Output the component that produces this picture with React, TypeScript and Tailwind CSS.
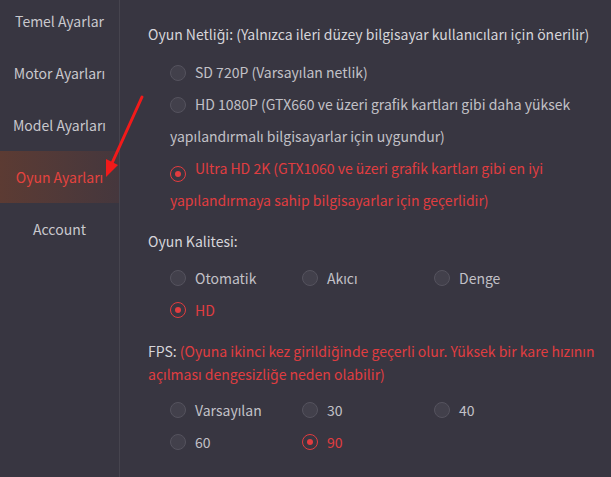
import React, { useState } from 'react';

const menu = ['Temel Ayarlar', 'Motor Ayarları', 'Model Ayarları', 'Oyun Ayarları', 'Account'];

const Radio: React.FC<{ on: boolean }> = ({ on }) => (
  <span
    className={`inline-flex h-4 w-4 shrink-0 items-center justify-center rounded-full border align-[-3px] ${
      on ? 'border-[#e23c3f] bg-transparent' : 'border-[#55535e] bg-[#42404b]'
    }`}
  >
    {on && <span className="h-[6px] w-[6px] rounded-full bg-[#e23c3f]" />}
  </span>
);

const App: React.FC = () => {
  const [active, setActive] = useState(3);
  const [netlik, setNetlik] = useState(2);
  const [kalite, setKalite] = useState('HD');
  const [fps, setFps] = useState('90');

  const netlikOptions = [
    'SD 720P (Varsayılan netlik)',
    'HD 1080P (GTX660 ve üzeri grafik kartları gibi daha yüksek yapılandırmalı bilgisayarlar için uygundur)',
    'Ultra HD 2K (GTX1060 ve üzeri grafik kartları gibi en iyi yapılandırmaya sahip bilgisayarlar için geçerlidir)',
  ];

  return (
    <div
      className="relative flex h-[477px] w-[611px] overflow-hidden bg-[#383641] text-[14px]"
      style={{ fontFamily: '"Noto Sans CJK SC", "Noto Sans", sans-serif' }}
    >
      {/* sol menü */}
      <div className="w-[120px] shrink-0 border-r border-[#46444e]">
        <div className="-mt-[5px]">
          {menu.map((m, i) => (
            <div
              key={m}
              onClick={() => setActive(i)}
              className={`flex h-[52px] cursor-pointer items-center justify-center ${
                i === active
                  ? 'bg-gradient-to-r from-[#5c3b33] to-[#45373d] text-[#e5433e]'
                  : 'text-[#c9c8cd]'
              }`}
            >
              {m}
            </div>
          ))}
        </div>
      </div>

      {/* içerik */}
      <div className="flex-1 pl-[28px] pr-[10px] pt-[23px]">
        <div className="leading-[22px] text-[#d6d5da]">
          Oyun Netliği: (Yalnızca ileri düzey bilgisayar kullanıcıları için önerilir)
        </div>
        <div className="mt-[11px] pl-[22px] pr-[14px]">
          {netlikOptions.map((t, i) => (
            <div
              key={i}
              onClick={() => setNetlik(i)}
              className={`cursor-pointer leading-[32px] ${netlik === i ? 'text-[#e03d40]' : 'text-[#c2c1c7]'}`}
            >
              <Radio on={netlik === i} />
              <span className="ml-[9px]">{t}</span>
            </div>
          ))}
        </div>

        <div className="mt-[14px] leading-[22px] text-[#d6d5da]">Oyun Kalitesi:</div>
        <div className="mt-[10px] grid grid-cols-[132px_132px_132px] pl-[22px]">
          {['Otomatik', 'Akıcı', 'Denge', 'HD'].map((t) => (
            <div
              key={t}
              onClick={() => setKalite(t)}
              className={`flex h-[32px] cursor-pointer items-center gap-[9px] ${
                kalite === t ? 'text-[#e03d40]' : 'text-[#c2c1c7]'
              }`}
            >
              <Radio on={kalite === t} />
              {t}
            </div>
          ))}
        </div>

        <div className="mt-[14px] leading-[23px] text-[#d6d5da]">
          FPS: <span className="text-[#e03d40]">(Oyuna ikinci kez girildiğinde geçerli olur. Yüksek bir kare hızının açılması dengesizliğe neden olabilir)</span>
        </div>
        <div className="mt-[8px] grid grid-cols-[132px_132px_132px] pl-[22px]">
          {['Varsayılan', '30', '40', '60', '90'].map((t) => (
            <div
              key={t}
              onClick={() => setFps(t)}
              className={`flex h-[32px] cursor-pointer items-center gap-[9px] ${
                fps === t ? 'text-[#e03d40]' : 'text-[#c2c1c7]'
              }`}
            >
              <Radio on={fps === t} />
              {t}
            </div>
          ))}
        </div>
      </div>

      {/* kırmızı ok */}
      <svg className="pointer-events-none absolute left-0 top-0" width="611" height="477">
        <line x1="142" y1="97" x2="108" y2="172" stroke="#f21a1a" strokeWidth="3" strokeLinecap="round" />
        <polygon points="106,177 106,159 118,165" fill="#f21a1a" />
      </svg>
    </div>
  );
};

export default App;
